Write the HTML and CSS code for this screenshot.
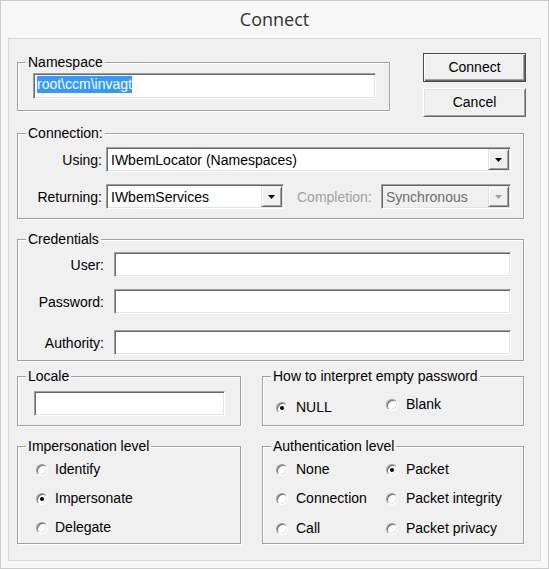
FILE: index.html
```html
<!DOCTYPE html>
<html>
<head>
<meta charset="utf-8">
<title>Connect</title>
<link rel="stylesheet" href="styles.css">
</head>
<body>
<svg class="defs" width="0" height="0" aria-hidden="true">
  <symbol id="arrow" viewBox="0 0 7 4">
    <polygon points="0,0 7,0 3.5,4"/>
  </symbol>
</svg>
<div class="window">
  <div class="title">Connect</div>
  <div class="panel">
    <div class="row-top">
      <fieldset class="group g-ns">
        <legend>Namespace</legend>
        <div class="ns-body">
          <div class="edit ns-edit"><span class="sel">root\ccm\invagt</span></div>
        </div>
      </fieldset>
      <div class="btns">
        <div class="btn btn-default">Connect</div>
        <div class="btn">Cancel</div>
      </div>
    </div>

    <fieldset class="group g-conn">
      <legend>Connection:</legend>
      <div class="conn-body">
        <div class="frow">
          <span class="lbl lbl-conn">Using:</span>
          <div class="combo combo-using">
            <span class="ctext">IWbemLocator (Namespaces)</span>
            <span class="cbtn"><svg class="arrow" width="7" height="4"><use href="#arrow"/></svg></span>
          </div>
        </div>
        <div class="frow frow-ret">
          <span class="lbl lbl-conn">Returning:</span>
          <div class="combo combo-ret">
            <span class="ctext">IWbemServices</span>
            <span class="cbtn"><svg class="arrow" width="7" height="4"><use href="#arrow"/></svg></span>
          </div>
          <span class="lbl-dis">Completion:</span>
          <div class="combo combo-dis">
            <span class="ctext">Synchronous</span>
            <span class="cbtn"><svg class="arrow" width="7" height="4"><use href="#arrow"/></svg></span>
          </div>
        </div>
      </div>
    </fieldset>

    <fieldset class="group g-cred">
      <legend>Credentials</legend>
      <div class="cred-body">
        <div class="frow">
          <span class="lbl lbl-cred">User:</span>
          <div class="edit cred-edit"></div>
        </div>
        <div class="frow frow-pw">
          <span class="lbl lbl-cred">Password:</span>
          <div class="edit cred-edit"></div>
        </div>
        <div class="frow frow-auth">
          <span class="lbl lbl-cred">Authority:</span>
          <div class="edit cred-edit"></div>
        </div>
      </div>
    </fieldset>

    <div class="row-pair row-locale">
      <fieldset class="group g-left g-locale">
        <legend>Locale</legend>
        <div class="locale-body">
          <div class="edit locale-edit"></div>
        </div>
      </fieldset>
      <fieldset class="group g-right g-how">
        <legend>How to interpret empty password</legend>
        <div class="how-body">
          <div class="ritem ritem-null"><span class="radio on"></span><span>NULL</span></div>
          <div class="ritem"><span class="radio"></span><span>Blank</span></div>
        </div>
      </fieldset>
    </div>

    <div class="row-pair row-levels">
      <fieldset class="group g-left g-imp">
        <legend>Impersonation level</legend>
        <div class="imp-body">
          <div class="ritem"><span class="radio"></span><span>Identify</span></div>
          <div class="ritem"><span class="radio on"></span><span>Impersonate</span></div>
          <div class="ritem"><span class="radio"></span><span>Delegate</span></div>
        </div>
      </fieldset>
      <fieldset class="group g-right g-auth">
        <legend>Authentication level</legend>
        <div class="auth-body">
          <div class="ritem"><span class="radio"></span><span>None</span></div>
          <div class="ritem"><span class="radio on"></span><span>Packet</span></div>
          <div class="ritem"><span class="radio"></span><span>Connection</span></div>
          <div class="ritem"><span class="radio"></span><span>Packet integrity</span></div>
          <div class="ritem ritem-last"><span class="radio"></span><span>Call</span></div>
          <div class="ritem ritem-last"><span class="radio"></span><span>Packet privacy</span></div>
        </div>
      </fieldset>
    </div>
  </div>
</div>
</body>
</html>
```

FILE: styles.css
```css
html, body {
  margin: 0;
  padding: 0;
  background: #f7f7f7;
}

.defs {
  position: absolute;
  width: 0;
  height: 0;
  overflow: hidden;
}

.window {
  width: 549px;
  height: 569px;
  box-sizing: border-box;
  border: 1px solid #cdcdcd;
  background: #f8f8f8;
  font-family: "Liberation Sans", Arial, sans-serif;
  font-size: 14px;
  color: #000;
}

.title {
  height: 37px;
  line-height: 37px;
  text-align: center;
  font-family: "Open Sans", "Noto Sans", sans-serif;
  font-size: 18px;
  color: #333;
}

.panel {
  width: 533px;
  height: 523px;
  margin-left: 7px;
  box-sizing: border-box;
  border: 1px solid #d9d9d9;
  background: #f0f0f0;
  padding: 14px 0 0 8px;
}

/* group boxes */
.group {
  margin: 0;
  padding: 0;
  min-width: 0;
  box-sizing: border-box;
  border: 1px solid #a0a0a0;
  box-shadow: 1px 1px 0 #fff, inset 1px 1px 0 #fff;
}

.group legend {
  margin-left: 8px;
  padding: 0 2px;
  line-height: 15px;
  font-size: 14px;
  background: #f0f0f0;
}

/* sunken edit field */
.edit, .combo {
  box-sizing: border-box;
  height: 25px;
  border: 1px solid;
  border-color: #a0a0a0 #fff #fff #a0a0a0;
  box-shadow: inset 1px 1px 0 #696969, inset -1px -1px 0 #e3e3e3;
  background: #fff;
}

/* top row */
.row-top {
  display: flex;
  align-items: flex-start;
}

.g-ns {
  width: 373px;
  height: 56px;
  margin-top: 2px;
}

.ns-body {
  padding: 3px 0 0 15px;
}

.ns-edit {
  width: 343px;
  height: 26px;
  padding: 2px 0 0 3px;
  line-height: 17px;
}

.sel {
  background: #3399ff;
  color: #fff;
  display: inline-block;
  height: 17px;
}

.btns {
  margin-left: 33px;
  display: flex;
  flex-direction: column;
  gap: 6px;
}

.btn {
  width: 103px;
  height: 29px;
  box-sizing: border-box;
  display: flex;
  align-items: center;
  justify-content: center;
  padding-bottom: 2px;
  background: #f0f0f0;
  border: 1px solid;
  border-color: #fff #696969 #696969 #fff;
  box-shadow: inset 1px 1px 0 #e3e3e3, inset -1px -1px 0 #a0a0a0;
}

.btn-default {
  border: 1px solid #4a4a4a;
  box-shadow: inset 1px 1px 0 #fff, inset -1px -1px 0 #696969, inset -2px -2px 0 #a0a0a0;
}

/* connection */
.g-conn {
  width: 507px;
  height: 93px;
  margin-top: 9px;
}

.conn-body {
  padding-top: 6px;
}

.frow {
  display: flex;
  align-items: center;
  height: 25px;
}

.frow-ret {
  margin-top: 12px;
}

.lbl {
  text-align: right;
  flex: none;
}

.lbl-conn {
  width: 84px;
  margin-right: 4px;
}

.combo {
  display: flex;
  align-items: center;
  padding: 1px;
}

.ctext {
  flex: 1;
  padding-left: 3px;
  white-space: nowrap;
  overflow: hidden;
}

.cbtn {
  flex: none;
  width: 21px;
  height: 21px;
  box-sizing: border-box;
  display: flex;
  align-items: center;
  justify-content: center;
  background: #f0f0f0;
  border: 1px solid;
  border-color: #e3e3e3 #696969 #696969 #e3e3e3;
  box-shadow: inset 1px 1px 0 #fff, inset -1px -1px 0 #a0a0a0;
}

.arrow {
  fill: #000;
  display: block;
}

.combo-using {
  width: 405px;
}

.combo-ret {
  width: 178px;
}

.lbl-dis {
  width: 84px;
  margin-left: 13px;
  color: #a0a0a0;
  flex: none;
}

.combo-dis {
  width: 130px;
  background: #f0f0f0;
  color: #6d6d6d;
}

.combo-dis .arrow {
  fill: #a0a0a0;
}

/* credentials */
.g-cred {
  width: 507px;
  height: 129px;
  margin-top: 13px;
}

.cred-body {
  padding-top: 5px;
}

.frow-pw {
  margin-top: 12px;
}

.frow-auth {
  margin-top: 16px;
}

.lbl-cred {
  width: 86px;
  margin-right: 10px;
}

.cred-edit {
  width: 397px;
}

/* paired rows */
.row-pair {
  display: flex;
  align-items: flex-start;
}

.row-locale {
  margin-top: 8px;
}

.row-levels {
  margin-top: 13px;
}

.g-left {
  width: 224px;
}

.g-right {
  width: 262px;
  margin-left: 21px;
}

.g-locale, .g-how {
  height: 57px;
}

.locale-body {
  padding: 7px 0 0 16px;
}

.locale-edit {
  width: 191px;
}

.how-body {
  padding: 12px 0 0 13px;
  display: flex;
  align-items: flex-start;
}

.ritem {
  display: flex;
  align-items: center;
  line-height: 16px;
  white-space: nowrap;
}

/* classic radio button */
.radio {
  flex: none;
  position: relative;
  width: 12px;
  height: 12px;
  box-sizing: border-box;
  margin-right: 8px;
  margin-top: 1px;
  border-radius: 50%;
  border: 1px solid;
  border-color: #a0a0a0 #ffffff #ffffff #a0a0a0;
  background: #fff;
  box-shadow: inset 1px 1px 0 #696969, inset -1px -1px 0 #e3e3e3;
}

.radio.on::after {
  content: "";
  position: absolute;
  left: 3px;
  top: 3px;
  width: 4px;
  height: 4px;
  border-radius: 50%;
  background: #000;
}

.ritem-null {
  width: 110px;
  margin-top: 3px;
}

.g-imp, .g-auth {
  height: 105px;
}

.imp-body {
  padding: 7px 0 0 18px;
  display: flex;
  flex-direction: column;
  gap: 13px;
}

.imp-body .radio {
  margin-right: 7px;
}

.auth-body {
  padding: 7px 0 0 13px;
  display: grid;
  grid-template-columns: 110px auto;
  row-gap: 13px;
}

.ritem-last {
  margin-top: 1px;
}
```
